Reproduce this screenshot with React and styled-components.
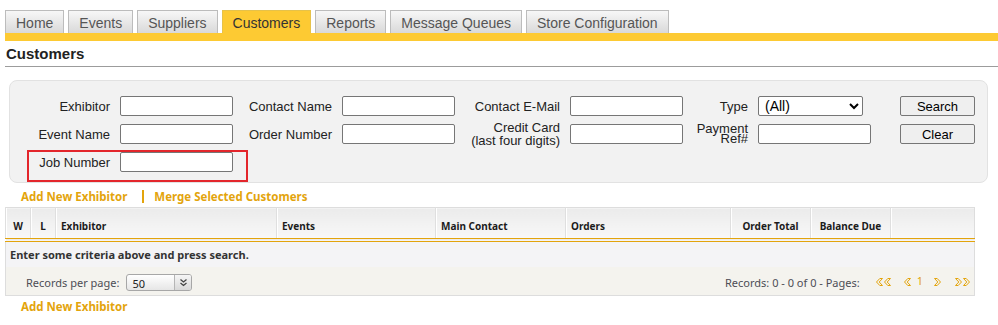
import React from "react";
import styled, { createGlobalStyle } from "styled-components";

const GOLD = "#e3a40c";
const YELLOW = "#fdca33";

const GlobalStyle = createGlobalStyle`
  body {
    margin: 0;
    background: #fff;
    font-family: "Liberation Sans", Arial, sans-serif;
    color: #222;
  }
`;

const Page = styled.div`
  width: 998px;
  box-sizing: border-box;
  padding: 10px 0 0 5px;
`;

const TabBar = styled.nav`
  display: flex;
  gap: 4px;
  border-bottom: 8px solid ${YELLOW};
`;

const Tab = styled.a`
  height: 23px;
  box-sizing: border-box;
  padding: 1px 10px 0;
  display: flex;
  align-items: center;
  border: 1px solid ${(p) => (p.$active ? "#e6c24a" : "#bcbcbc")};
  border-bottom: none;
  background: ${(p) => (p.$active ? YELLOW : "linear-gradient(#f7f7f7, #d9d9d9)")};
  font-size: 14px;
  color: ${(p) => (p.$active ? "#333" : "#555")};
  cursor: pointer;
`;

const Heading = styled.h1`
  margin: 0;
  padding: 4px 0 4px 1px;
  font-size: 15px;
  font-weight: bold;
  color: #222;
  border-bottom: 1px solid #9c9c9c;
`;

const SearchPanel = styled.form`
  position: relative;
  margin: 13px 10px 0 4px;
  padding: 15px 12px 10px 5px;
  display: grid;
  grid-template-columns: 95px 113px 89px 113px 95px 113px 55px 113px 1fr;
  grid-template-rows: repeat(3, 20px);
  column-gap: 10px;
  row-gap: 8px;
  background: #f2f2f2;
  border: 1px solid #e2e2e2;
  border-radius: 8px;
`;

const Label = styled.label`
  display: flex;
  align-items: center;
  justify-content: flex-end;
  text-align: right;
  font-size: 13px;
  line-height: ${(p) => p.$lh || 15}px;
  color: #222;
  white-space: nowrap;
`;

const TextInput = styled.input`
  width: 113px;
  height: 20px;
  box-sizing: border-box;
  margin: 0;
  padding: 1px 3px;
  border: 1px solid #767676;
  border-radius: 2px;
  background: #fff;
  font: 13px "Liberation Sans", Arial, sans-serif;
`;

const TypeSelect = styled.select`
  width: 105px;
  height: 20px;
  box-sizing: border-box;
  margin: 0;
  padding: 0 2px;
  border: 1px solid #767676;
  border-radius: 2px;
  background: #fff;
  font: 14px "Liberation Sans", Arial, sans-serif;
  color: #000;
`;

const ActionButton = styled.button`
  justify-self: end;
  width: 75px;
  height: 20px;
  box-sizing: border-box;
  margin: 0;
  padding: 0;
  border: 1px solid #767676;
  border-radius: 2px;
  background: #efefef;
  font: 13px "Liberation Sans", Arial, sans-serif;
  color: #000;
`;

const Highlight = styled.div`
  position: absolute;
  left: 17px;
  top: 69px;
  width: 221px;
  height: 32px;
  box-sizing: border-box;
  border: 2px solid #e3262c;
  pointer-events: none;
`;

const LinkRow = styled.div`
  display: flex;
  align-items: center;
  margin: ${(p) => p.$top || 4}px 0 0 16px;
  height: 16px;
  font-family: "Noto Sans", sans-serif;
  font-size: 11.5px;
  font-weight: bold;
`;

const GoldLink = styled.a`
  color: ${GOLD};
  cursor: pointer;
`;

const LinkDivider = styled.span`
  width: 2px;
  height: 13px;
  background: ${GOLD};
  margin: 0 10px 0 15px;
`;

const Grid = styled.table`
  width: 970px;
  margin-top: 3px;
  border-collapse: collapse;
  table-layout: fixed;
  border: 1px solid #dddddd;
  font-family: "Noto Sans", sans-serif;
`;

const HeadCell = styled.th`
  width: ${(p) => p.$w}px;
  height: 32px;
  box-sizing: border-box;
  padding: 6px ${(p) => (p.$align === "center" ? 0 : 5)}px 0;
  vertical-align: middle;
  text-align: ${(p) => p.$align || "left"};
  font-size: 10px;
  font-weight: bold;
  color: #1c1c1c;
  white-space: nowrap;
  background: linear-gradient(#ebebeb, #f8f8f8);
  border-left: 1px solid #dfdfdf;
  border-bottom: 4px double ${GOLD};
  box-shadow: inset 1px 0 #fff;
`;

const MessageCell = styled.td`
  height: 25px;
  box-sizing: content-box;
  padding: 0 4px;
  background: #f4f4f6;
  font-size: 11px;
  font-weight: bold;
  color: #333;
`;

const FooterCell = styled.td`
  height: 25px;
  box-sizing: content-box;
  padding: 3px 4px 0 20px;
  background: #f4f3ee;
`;

const FooterBar = styled.div`
  display: flex;
  align-items: center;
  justify-content: space-between;
  font-size: 11px;
  color: #4d4d55;
`;

const PerPage = styled.div`
  display: flex;
  align-items: center;
  gap: 7px;
`;

const MiniSelect = styled.div`
  display: flex;
  width: 66px;
  height: 17px;
  box-sizing: border-box;
  border: 1px solid #a7a7a7;
  border-radius: 3px;
  overflow: hidden;
  background: linear-gradient(#ffffff, #e6e6e6);
  color: #222;
`;

const MiniValue = styled.span`
  flex: 1;
  padding: 2px 0 0 5px;
  font-size: 11px;
  line-height: 14px;
`;

const MiniArrow = styled.span`
  width: 16px;
  display: flex;
  align-items: center;
  justify-content: center;
  border-left: 1px solid #b5b5b5;
  background: linear-gradient(#f6f6f6, #d8d8d8);
`;

const Pager = styled.div`
  display: flex;
  align-items: center;
`;

const PagerNav = styled.a`
  display: flex;
  gap: 1px;
  margin-left: ${(p) => p.$gap}px;
  cursor: pointer;
`;

const PageNumber = styled.span`
  margin: -4px 0 0 ${(p) => p.$gap}px;
  color: ${GOLD};
  font-size: 11px;
`;

const ChevronSvg = styled.svg`
  display: block;
  transform: ${(p) => (p.$flip ? "scaleX(-1)" : "none")};
`;

const Chevron = ({ flip }) => (
  <ChevronSvg $flip={flip} width="7" height="8" viewBox="0 0 7 8">
    <polygon
      points="0.5,4 3.8,0.5 6.5,0.5 3.2,4 6.5,7.5 3.8,7.5"
      fill="none"
      stroke={GOLD}
      strokeWidth="1"
    />
  </ChevronSvg>
);

const DownArrows = () => (
  <svg width="9" height="9" viewBox="0 0 9 9">
    <path d="M1.5 1.5 L4.5 4 L7.5 1.5 M1.5 5 L4.5 7.5 L7.5 5" fill="none" stroke="#444" strokeWidth="1.3" />
  </svg>
);

const tabs = ["Home", "Events", "Suppliers", "Customers", "Reports", "Message Queues", "Store Configuration"];

const columns = [
  { label: "W", w: 25, align: "center" },
  { label: "L", w: 25, align: "center" },
  { label: "Exhibitor", w: 221 },
  { label: "Events", w: 159 },
  { label: "Main Contact", w: 130 },
  { label: "Orders", w: 165 },
  { label: "Order Total", w: 80, align: "center" },
  { label: "Balance Due", w: 80, align: "center" },
  { label: "", w: 84 },
];

export default function App() {
  return (
    <Page>
      <GlobalStyle />
      <TabBar>
        {tabs.map((t) => (
          <Tab key={t} $active={t === "Customers"}>
            {t}
          </Tab>
        ))}
      </TabBar>
      <Heading>Customers</Heading>

      <SearchPanel onSubmit={(e) => e.preventDefault()}>
        <Label>Exhibitor</Label>
        <TextInput />
        <Label>Contact Name</Label>
        <TextInput />
        <Label>Contact E-Mail</Label>
        <TextInput />
        <Label>Type</Label>
        <TypeSelect defaultValue="all">
          <option value="all">(All)</option>
        </TypeSelect>
        <ActionButton type="submit">Search</ActionButton>

        <Label>Event Name</Label>
        <TextInput />
        <Label>Order Number</Label>
        <TextInput />
        <Label $lh={13}>
          Credit Card
          <br />
          (last four digits)
        </Label>
        <TextInput />
        <Label $lh={10}>
          Payment
          <br />
          Ref#
        </Label>
        <TextInput />
        <ActionButton type="button">Clear</ActionButton>

        <Label>Job Number</Label>
        <TextInput />
        <Highlight />
      </SearchPanel>

      <LinkRow $top={5}>
        <GoldLink>Add New Exhibitor</GoldLink>
        <LinkDivider />
        <GoldLink>Merge Selected Customers</GoldLink>
      </LinkRow>

      <Grid>
        <thead>
          <tr>
            {columns.map((c, i) => (
              <HeadCell key={i} $w={c.w} $align={c.align}>
                {c.label}
              </HeadCell>
            ))}
          </tr>
        </thead>
        <tbody>
          <tr>
            <MessageCell colSpan={9}>Enter some criteria above and press search.</MessageCell>
          </tr>
          <tr>
            <FooterCell colSpan={9}>
              <FooterBar>
                <PerPage>
                  Records per page:
                  <MiniSelect>
                    <MiniValue>50</MiniValue>
                    <MiniArrow>
                      <DownArrows />
                    </MiniArrow>
                  </MiniSelect>
                </PerPage>
                <Pager>
                  Records: 0 - 0 of 0 - Pages:
                  <PagerNav $gap={16}>
                    <Chevron />
                    <Chevron />
                  </PagerNav>
                  <PagerNav $gap={13}>
                    <Chevron />
                  </PagerNav>
                  <PageNumber $gap={6}>1</PageNumber>
                  <PagerNav $gap={11}>
                    <Chevron flip />
                  </PagerNav>
                  <PagerNav $gap={14}>
                    <Chevron flip />
                    <Chevron flip />
                  </PagerNav>
                </Pager>
              </FooterBar>
            </FooterCell>
          </tr>
        </tbody>
      </Grid>

      <LinkRow $top={3}>
        <GoldLink>Add New Exhibitor</GoldLink>
      </LinkRow>
    </Page>
  );
}
